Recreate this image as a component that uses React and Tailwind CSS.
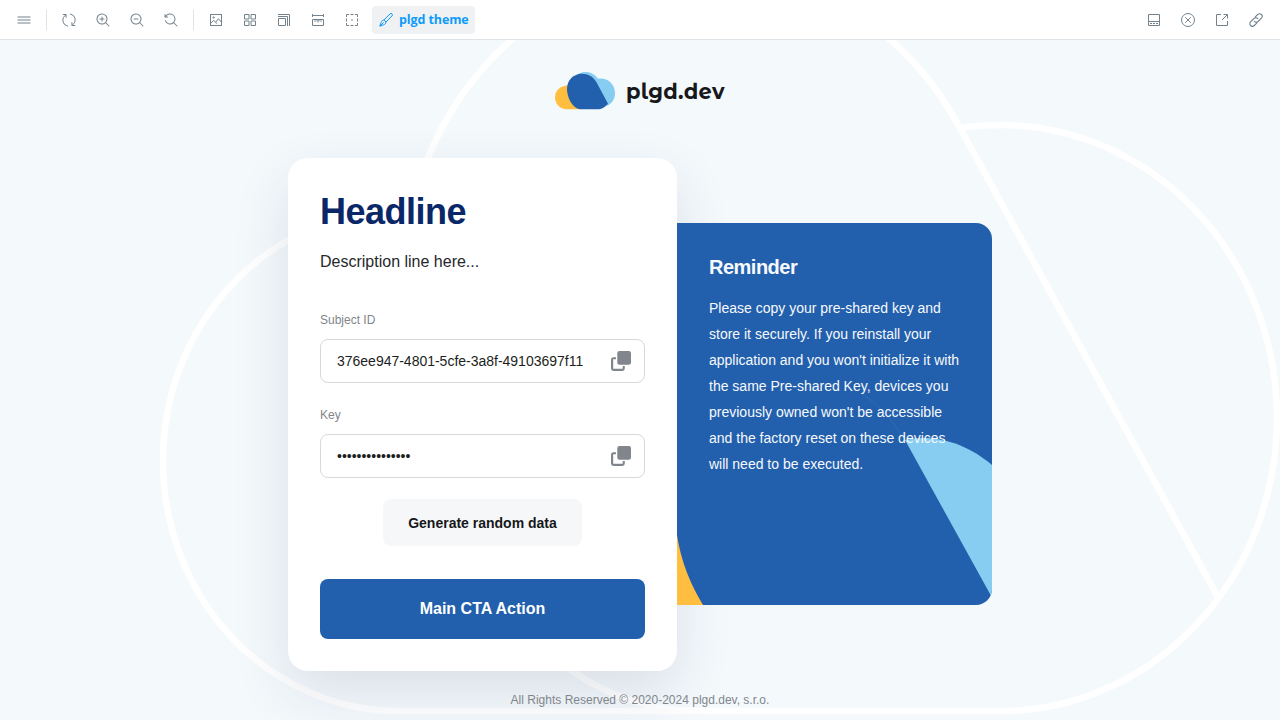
import React from "react";

function Icon({ children, className = "" }) {
  return (
    <svg
      width="14"
      height="14"
      viewBox="0 0 14 14"
      fill="none"
      stroke="currentColor"
      className={className}
    >
      {children}
    </svg>
  );
}

const LENS =
  "M9.544 10.206a5.5 5.5 0 11.662-.662.5.5 0 01.148.102l3 3a.5.5 0 01-.708.708l-3-3a.5.5 0 01-.102-.148zM10.5 6a4.5 4.5 0 10-9 0 4.5 4.5 0 009 0z";

const MenuIcon = () => (
  <Icon>
    <path d="M.5 4h13M.5 7h13M.5 10h13" />
  </Icon>
);
const SyncIcon = () => (
  <Icon>
    <path d="M5.500 13.100A6.200 6.200 0 013.400 2M8.500 .9A6.200 6.200 0 0110.600 12" strokeLinecap="round" />
    <path d="M1.200 1.500h2.900v2.900M12.800 12.500H9.900V9.600" strokeLinecap="round" strokeLinejoin="round" />
  </Icon>
);
const ZoomInIcon = () => (
  <Icon>
    <g fill="currentColor" stroke="none">
      <path d="M6 3.5a.5.5 0 01.5.5v1.5H8a.5.5 0 010 1H6.5V8a.5.5 0 01-1 0V6.5H4a.5.5 0 010-1h1.5V4a.5.5 0 01.5-.5z" />
      <path fillRule="evenodd" d={LENS} />
    </g>
  </Icon>
);
const ZoomOutIcon = () => (
  <Icon>
    <g fill="currentColor" stroke="none">
      <path d="M4 5.5a.5.5 0 000 1h4a.5.5 0 000-1H4z" />
      <path fillRule="evenodd" d={LENS} />
    </g>
  </Icon>
);
const ZoomResetIcon = () => (
  <Icon>
    <path
      fill="currentColor"
      stroke="none"
      d="M1.5 2.837V1.5a.5.5 0 00-1 0V4a.5.5 0 00.5.5h2.5a.5.5 0 000-1H2.258a4.5 4.5 0 11-.496 4.016.5.5 0 10-.942.337 5.502 5.502 0 008.724 2.353.5.5 0 00.102.148l3 3a.5.5 0 00.708-.708l-3-3a.5.5 0 00-.148-.102A5.5 5.5 0 101.5 2.837z"
    />
  </Icon>
);
const PhotoIcon = () => (
  <Icon>
    <rect x="1.5" y="1.5" width="11" height="11" />
    <path d="M1.8 10.3l3-3 1.900 2 2.800-3.600 2.800 3.400M6.600 9.300l1.200 1.400" />
    <circle cx="4.600" cy="4.500" r=".7" />
  </Icon>
);
const GridIcon = () => (
  <Icon>
    <path d="M1.500 1.500H6V6H1.500zM8 1.500h4.500V6H8zM1.500 8H6v4.500H1.500zM8 8h4.500v4.500H8z" />
  </Icon>
);
const ViewportIcon = () => (
  <Icon>
    <path d="M1.5 5.5h7v7h-7zM1 3.5h9.5V13M1 1.5h11.5V13" />
  </Icon>
);
const RulerIcon = () => (
  <Icon>
    <path d="M1.500 1v3M12.500 1v3M1.500 2.500h11M1.500 6.500h11v6h-11z" />
    <path d="M4 6.500V9M6 6.500v2M8 6.500v2M10 6.500V9M7 6.500v3" strokeWidth=".8" />
  </Icon>
);
const OutlineIcon = () => (
  <Icon>
    <path d="M1.5 4V1.5H4M5.5 1.5h3M10 1.5h2.5V4M12.5 5.5v3M12.5 10v2.5H10M8.5 12.5h-3M4 12.5H1.5V10M1.5 8.5v-3" />
    <path d="M6 7h2" strokeWidth="1.500" opacity=".6" />
  </Icon>
);
const BrushIcon = () => (
  <Icon>
    <path
      strokeLinejoin="round"
      d="M4.900 7L11 .9a1.400 1.400 0 012 0 1.400 1.400 0 010 2L7 9M4.900 7L7 9M4.900 7C3.400 7.200 2.600 8 2.200 9.300L.8 13.200l3.900-1.400C6 11.400 6.800 10.500 7 9M1 13l3.600-3.600"
    />
  </Icon>
);
const PanelIcon = () => (
  <Icon>
    <path d="M1.5 1.5h11v11h-11zM1.5 8.5h11M3 10.5h2M6 10.5h2M9 10.5h2" />
  </Icon>
);
const CloseIcon = () => (
  <Icon>
    <circle cx="7" cy="7" r="6.5" />
    <path d="M4.5 4.5l5 5M9.5 4.5l-5 5" strokeLinecap="round" />
  </Icon>
);
const ShareIcon = () => (
  <Icon>
    <path d="M6 1.500H1.500v11h11V8M8.500 1.500h4v4M12.300 1.700L7 7" />
  </Icon>
);
const LinkIcon = () => (
  <Icon>
    <path
      strokeLinecap="round"
      strokeWidth="1.100"
      d="M5.300 8.300a2.600 2.600 0 003.800.2l3.300-3.300a2.600 2.600 0 00-3.700-3.700L6.300 3.900M8.700 5.700a2.600 2.600 0 00-3.800-.2L1.600 8.800a2.600 2.600 0 003.700 3.700l2.400-2.400"
    />
  </Icon>
);

function ToolButton({ children }) {
  return (
    <button className="flex h-7 w-7 shrink-0 items-center justify-center text-[#73828c]">
      {children}
    </button>
  );
}

function Separator() {
  return <div className="mx-[2px] h-5 w-px bg-[#dde3e7]" />;
}

function Toolbar() {
  return (
    <header className="flex h-10 shrink-0 items-center justify-between border-b border-[#dde3e7] bg-white px-[10px]">
      <div className="flex items-center gap-[6px]">
        <ToolButton><MenuIcon /></ToolButton>
        <Separator />
        <ToolButton><SyncIcon /></ToolButton>
        <ToolButton><ZoomInIcon /></ToolButton>
        <ToolButton><ZoomOutIcon /></ToolButton>
        <ToolButton><ZoomResetIcon /></ToolButton>
        <Separator />
        <ToolButton><PhotoIcon /></ToolButton>
        <ToolButton><GridIcon /></ToolButton>
        <ToolButton><ViewportIcon /></ToolButton>
        <ToolButton><RulerIcon /></ToolButton>
        <ToolButton><OutlineIcon /></ToolButton>
        <button className="flex h-7 w-[103px] items-center gap-[6px] rounded-[4px] bg-[#f0f1f3] pl-[7px] text-[#0e9bfb]">
          <BrushIcon />
          <span className="whitespace-nowrap pt-px font-['Open_Sans',sans-serif] text-[12.500px] font-bold tracking-[-0.1px]">
            plgd theme
          </span>
        </button>
      </div>
      <div className="flex items-center gap-[6px]">
        <ToolButton><PanelIcon /></ToolButton>
        <ToolButton><CloseIcon /></ToolButton>
        <ToolButton><ShareIcon /></ToolButton>
        <ToolButton><LinkIcon /></ToolButton>
      </div>
    </header>
  );
}

function CloudOutline() {
  return (
    <svg
      className="pointer-events-none absolute inset-0"
      width="1280"
      height="680"
      viewBox="0 40 1280 680"
      fill="none"
      stroke="#fff"
      strokeWidth="6.5"
    >
      <path d="M399 211A236 250 0 00399 711H1000A277 293 0 001277 418A277 293 0 001000 125Q980 125 960 128" />
      <path d="M1218 597L960 128A297 314 0 00404 287C404 460 500 711 700 711" />
    </svg>
  );
}

function Logo() {
  return (
    <div className="flex h-[38px] w-[170px] items-start gap-[11px]">
      <svg className="shrink-0" width="60" height="38" viewBox="0 .7 60 38">
        <path fill="#87cdf1" d="M20 5C25 0 36-2 43 7.400C52 6 60 12 60 22c0 6-3 10-7.500 12.500L30 20z" />
        <path fill="#ffbe40" d="M13 14C5 14.500 0 19.500 0 26c0 6.500 5 12 12 12h13z" />
        <path fill="#2260ad" d="M27 2.500C35 2.500 39 7 41.500 11L53 32.500C50 36 47 38 42 38H25C17 37 12 26 12 17.500 12 9 18.500 2.500 27 2.500z" />
      </svg>
      <span className="whitespace-nowrap font-['Montserrat_Alternates',Montserrat,Lato,sans-serif] text-[21px] font-bold leading-[40px] tracking-[0.300px] text-[#16181a]">
        plgd.dev
      </span>
    </div>
  );
}

function CopyIcon() {
  return (
    <svg width="20" height="20" viewBox="0 0 20 20" fill="#81868c">
      <rect x="6.300" y="0" width="13.700" height="13.700" rx="2.200" />
      <path d="M5 6.300v2H2.200V17.800H11.700V15H13.800V17.600A2.400 2.400 0 0111.400 20H2.400A2.400 2.400 0 010 17.600V8.700A2.400 2.400 0 012.400 6.300z" />
    </svg>
  );
}

function Field({ label, value }) {
  return (
    <div className="flex flex-col">
      <label className="text-[12px] leading-[18px] text-[#81868c]">{label}</label>
      <div className="mt-[10px] flex h-11 items-center justify-between rounded-[8px] border border-[#d6d8da] pl-4 pr-[13px] text-[14px] text-[#1c1e21]">
        <span className="leading-5 tracking-[-0.01px]">{value}</span>
        <CopyIcon />
      </div>
    </div>
  );
}

function FormCard() {
  return (
    <section className="relative flex h-[513px] w-[389px] flex-col rounded-[20px] bg-white px-8 shadow-[0_22px_56px_rgba(25,45,85,0.12)]">
      <h1 className="mt-[32px] text-[36px] font-bold leading-[44px] tracking-[-0.5px] text-[#0a2767]">
        Headline
      </h1>
      <p className="mt-[16px] text-[16px] leading-6 text-[#26282b]">Description line here...</p>
      <div className="mt-[37.500px] flex flex-col gap-[23px]">
        <Field label="Subject ID" value="376ee947-4801-5cfe-3a8f-49103697f11" />
        <Field label="Key" value="•••••••••••••••" />
      </div>
      <button className="mt-[20.500px] h-[47.500px] w-[199px] self-center rounded-[8px] bg-[#f6f7f9] pt-[2px] text-[14px] font-bold text-[#16181a]">
        Generate random data
      </button>
      <button className="mt-[32.500px] h-[60px] rounded-[8px] bg-[#2260ad] text-[16px] font-bold text-white">
        Main CTA Action
      </button>
    </section>
  );
}

function Reminder() {
  return (
    <aside className="relative mt-[65.500px] h-[382px] w-[315px] overflow-hidden rounded-r-[16px] bg-[#2260ad] px-8 pt-[30px] text-[#f7f9fc]">
      <svg className="absolute inset-0" width="315" height="382" viewBox="677 223 315 382">
        <path fill="#87cdf1" d="M905 440C935 433 968 444 992 465V597.500z" />
        <path fill="#ffbe40" d="M677 535C681 562 691 585 703 605H677z" />
        <path d="M862 394Q883 406 905 440" fill="none" stroke="#6ea0cc" strokeWidth=".3" opacity=".6" />
      </svg>
      <div className="relative">
        <h2 className="text-[20px] font-bold leading-7 tracking-[-0.5px]">Reminder</h2>
        <p className="mt-[14px] w-[254px] text-[14px] leading-[26px]">
          Please copy your pre-shared key and store it securely. If you reinstall your application
          and you won't initialize it with the same Pre-shared Key, devices you previously owned
          won't be accessible and the factory reset on these devices will need to be executed.
        </p>
      </div>
    </aside>
  );
}

export default function App() {
  return (
    <div className="flex h-[720px] w-[1280px] flex-col overflow-hidden bg-[#f4f9fc] font-['Liberation_Sans',Arial,sans-serif]">
      <Toolbar />
      <main className="relative flex flex-1 flex-col items-center">
        <CloudOutline />
        <div className="relative mt-[32px]">
          <Logo />
        </div>
        <div className="relative mt-[47.500px] flex w-[704px] items-start">
          <FormCard />
          <Reminder />
        </div>
        <footer className="relative mt-[20.500px] text-[12px] leading-[18px] text-[#81868c]">
          All Rights Reserved © 2020-2024 plgd.dev, s.r.o.
        </footer>
      </main>
    </div>
  );
}
